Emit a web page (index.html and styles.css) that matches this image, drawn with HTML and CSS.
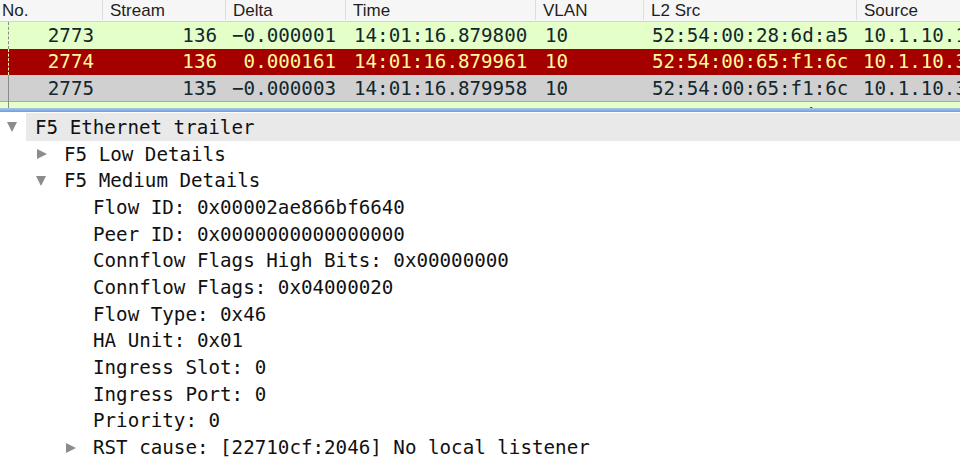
FILE: index.html
```html
<!DOCTYPE html>
<html>
<head>
<meta charset="utf-8">
<link rel="stylesheet" href="styles.css">
</head>
<body>
<div class="app">
  <div class="plist">
    <div class="phead">
      <div class="hc first">No.</div>
      <div class="hc">Stream</div>
      <div class="hc">Delta</div>
      <div class="hc">Time</div>
      <div class="hc">VLAN</div>
      <div class="hc">L2 Src</div>
      <div class="hc">Source</div>
    </div>
    <div class="prow green">
      <div class="c no"><span class="rel dashed"></span><span class="num">2773</span></div>
      <div class="c r">136</div>
      <div class="c r d">−0.000001</div>
      <div class="c l t">14:01:16.879800</div>
      <div class="c l v">10</div>
      <div class="c l">52:54:00:28:6d:a5</div>
      <div class="c l s">10.1.10.1</div>
    </div>
    <div class="prow red">
      <div class="c no"><span class="rel dashed"></span><span class="num">2774</span></div>
      <div class="c r">136</div>
      <div class="c r d">0.000161</div>
      <div class="c l t">14:01:16.879961</div>
      <div class="c l v">10</div>
      <div class="c l">52:54:00:65:f1:6c</div>
      <div class="c l s">10.1.10.3</div>
    </div>
    <div class="prow gray">
      <div class="c no"><span class="rel"></span><span class="num">2775</span></div>
      <div class="c r">135</div>
      <div class="c r d">−0.000003</div>
      <div class="c l t">14:01:16.879958</div>
      <div class="c l v">10</div>
      <div class="c l">52:54:00:65:f1:6c</div>
      <div class="c l s">10.1.10.3</div>
    </div>
    <div class="prow green">
      <div class="c no"><span class="rel"></span><span class="num">2776</span></div>
      <div class="c r">137</div>
      <div class="c r d">0.167601</div>
      <div class="c l t">14:01:17.047640</div>
      <div class="c l v">10</div>
      <div class="c l">52:54:00:28:6d:a5</div>
      <div class="c l s">10.1.10.1</div>
    </div>
  </div>
  <div class="splitter"></div>
  <div class="tree">
    <div class="node top lv0"><span class="tw"><span class="down"></span></span><span class="lbl sel">F5 Ethernet trailer</span></div>
    <div class="node lv1"><span class="tw"><span class="right"></span></span><span class="lbl">F5 Low Details</span></div>
    <div class="node lv1"><span class="tw"><span class="down"></span></span><span class="lbl">F5 Medium Details</span></div>
    <div class="node lv2"><span class="tw"></span><span class="lbl">Flow ID: 0x00002ae866bf6640</span></div>
    <div class="node lv2"><span class="tw"></span><span class="lbl">Peer ID: 0x0000000000000000</span></div>
    <div class="node lv2"><span class="tw"></span><span class="lbl">Connflow Flags High Bits: 0x00000000</span></div>
    <div class="node lv2"><span class="tw"></span><span class="lbl">Connflow Flags: 0x04000020</span></div>
    <div class="node lv2"><span class="tw"></span><span class="lbl">Flow Type: 0x46</span></div>
    <div class="node lv2"><span class="tw"></span><span class="lbl">HA Unit: 0x01</span></div>
    <div class="node lv2"><span class="tw"></span><span class="lbl">Ingress Slot: 0</span></div>
    <div class="node lv2"><span class="tw"></span><span class="lbl">Ingress Port: 0</span></div>
    <div class="node lv2"><span class="tw"></span><span class="lbl">Priority: 0</span></div>
    <div class="node lv2"><span class="tw"><span class="right"></span></span><span class="lbl">RST cause: [22710cf:2046] No local listener</span></div>
  </div>
</div>
</body>
</html>
```

FILE: styles.css
```css
html, body {
  margin: 0;
  padding: 0;
  background: #ffffff;
  overflow: hidden;
}
.app {
  width: 960px;
  height: 460px;
  overflow: hidden;
  display: flex;
  flex-direction: column;
}
.plist {
  height: 108px;
  overflow: hidden;
  flex: none;
}
.phead, .prow {
  display: grid;
  grid-template-columns: 102px 123px 120px 190px 108px 213px 1fr;
}
.phead {
  height: 21px;
  background: #f6f6f6;
  border-bottom: 1px solid #d4d4d4;
  font-family: "Liberation Sans", Arial, sans-serif;
  font-size: 17px;
  color: #1e1e1e;
}
.hc {
  display: flex;
  align-items: center;
  padding-left: 7px;
  border-left: 1px solid #dedede;
  white-space: nowrap;
  overflow: hidden;
  margin: 0 0 3px 0;
  height: 18px;
  padding-top: 2px;
}
.hc.first {
  border-left: none;
  padding-left: 2px;
}
.prow {
  height: 26.67px;
  font-family: "DejaVu Sans Mono", "Liberation Mono", monospace;
  font-size: 19.2px;
  white-space: nowrap;
}
.prow.green { background: #e4ffc7; color: #12272e; }
.prow.red { background: #a40000; color: #fffc9c; }
.prow.gray { background: #d0d0d0; color: #12272e; box-shadow: inset 0 -1px 0 #a9a9a9; }
.c {
  display: flex;
  align-items: center;
  overflow: hidden;
}
.c.r { justify-content: flex-end; padding-right: 8px; }
.c.r.d { padding-right: 9px; }
.c.l { padding-left: 9px; }
.c.l.v { padding-left: 10px; }
.c.l.s { padding-left: 7px; }
.c.no {
  justify-content: space-between;
  padding-right: 8px;
}
.rel {
  align-self: stretch;
  width: 0;
  margin-left: 8px;
  border-left: 1px solid #8a8a8a;
}
.prow.green .rel.dashed { border-left: 1px dashed #8a8a8a; }
.prow.red .rel.dashed { border-left: 1px dashed #fffc9c; }
.splitter {
  height: 4px;
  flex: none;
  background: linear-gradient(#a8c8ee, #6d9fd8);
}
.tree {
  flex: 1;
  font-family: "DejaVu Sans Mono", "Liberation Mono", monospace;
  font-size: 19.2px;
  color: #111111;
  padding-top: 1px;
}
.node {
  display: flex;
  align-items: stretch;
  height: 26.67px;
  white-space: nowrap;
}
.node.top { height: 28px; }
.lv1 { padding-left: 29px; }
.lv2 { padding-left: 58px; }
.tw {
  width: 26px;
  flex: none;
  display: flex;
  align-items: center;
}
.lbl {
  flex: 1;
  display: flex;
  align-items: center;
  padding-left: 9px;
}
.lbl.sel { background: #e9e9e9; }
.down {
  width: 0;
  height: 0;
  margin-left: 7px;
  border-left: 5.5px solid transparent;
  border-right: 5.5px solid transparent;
  border-top: 10px solid #8c8c8c;
}
.right {
  width: 0;
  height: 0;
  margin-left: 8px;
  border-top: 5.5px solid transparent;
  border-bottom: 5.5px solid transparent;
  border-left: 10px solid #8c8c8c;
}
```
